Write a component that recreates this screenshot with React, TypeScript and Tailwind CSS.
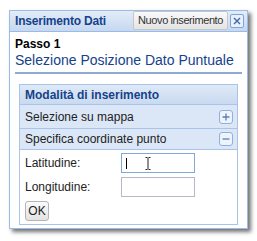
import React from "react";

export default function App() {
  const font = { fontFamily: '"Liberation Sans", Arial, sans-serif' };
  return (
    <div className="w-[257px] h-[241px] bg-white pt-[10px] pl-[9px]" style={font}>
      <div className="w-[239px] h-[219px] border border-[#99bbe8] bg-white shadow-[3px_3px_4px_rgba(0,0,0,0.55)] flex flex-col">
        {/* header */}
        <div className="h-[21px] flex items-center bg-gradient-to-b from-[#e3ecf8] to-[#c6d8f0] border-b border-[#99bbe8] pl-[5px] pr-[3px]">
          <span className="text-[12px] font-bold text-[#15428b] flex-1 leading-none tracking-[-0.2px]">Inserimento Dati</span>
          <button className="h-[19px] mt-[-1px] px-[4px] text-[11px] tracking-[-0.4px] text-[#333] bg-gradient-to-b from-[#fafafa] to-[#e4e4e4] border border-[#c6c6c6] rounded-[2px] leading-none">Nuovo inserimento</button>
          <span className="ml-[2px] w-[14px] h-[14px] border border-[#7fa3d6] rounded-[2px] bg-[#e8f0fb] flex items-center justify-center">
            <svg width="10" height="10" viewBox="0 0 10 10"><path d="M2 2 L8 8 M8 2 L2 8" stroke="#3d6aac" strokeWidth="1.4" /></svg>
          </span>
        </div>
        {/* body */}
        <div className="px-[5px] pt-[5px] flex-1 flex flex-col">
          <div className="text-[12px] font-bold text-black leading-[14px]">Passo 1</div>
          <div className="text-[14px] text-[#15428b] leading-[17px] mt-[1px] pb-[3px] border-b-2 border-[#8eaad3]">Selezione Posizione Dato Puntuale</div>
          <div className="mx-[4px] mt-[10px] border border-[#a8c4ea] flex flex-col">
            <div className="h-[20px] flex items-center pl-[5px] bg-gradient-to-b from-[#dfe9f6] to-[#c9daf0] border-b border-[#a8c4ea] text-[12px] font-bold text-[#15428b]">Modalità di inserimento</div>
            <div className="h-[24px] flex items-center pl-[5px] pr-[4px] bg-[#dbe7f6] border-b border-[#a8c4ea] text-[12px] text-[#222]">
              <span className="flex-1">Selezione su mappa</span>
              <span className="w-[14px] h-[14px] border border-[#8fb0dd] rounded-[3px] bg-[#eef4fc] flex items-center justify-center">
                <svg width="8" height="8" viewBox="0 0 8 8"><path d="M4 0.5 V7.5 M0.5 4 H7.5" stroke="#5a7fb8" strokeWidth="1.3" /></svg>
              </span>
            </div>
            <div className="h-[21px] flex items-center pl-[5px] pr-[4px] bg-[#dbe7f6] border-b border-[#a8c4ea] text-[12px] text-[#222]">
              <span className="flex-1">Specifica coordinate punto</span>
              <span className="w-[14px] h-[14px] border border-[#8fb0dd] rounded-[3px] bg-[#eef4fc] flex items-center justify-center">
                <svg width="8" height="8" viewBox="0 0 8 8"><path d="M0.5 4 H7.5" stroke="#5a7fb8" strokeWidth="1.3" /></svg>
              </span>
            </div>
            <div className="pl-[5px] pt-[3px] pb-[3px] flex flex-col">
              <div className="flex items-center h-[20px]">
                <span className="w-[96px] text-[12px] text-[#222]">Latitudine:</span>
                <div className="w-[74px] h-[20px] border border-[#7fa9db] bg-white flex items-center pl-[4px] gap-[18px]">
                  <span className="w-[1px] h-[11px] bg-black"></span>
                  <svg width="6" height="13" viewBox="0 0 6 13"><path d="M0.5 0.5 H2.5 M3.5 0.5 H5.5 M3 1 V12 M0.5 12.5 H2.5 M3.5 12.5 H5.5" stroke="#222" strokeWidth="1" fill="none" /></svg>
                </div>
              </div>
              <div className="flex items-center h-[20px] mt-[4px]">
                <span className="w-[96px] text-[12px] text-[#222]">Longitudine:</span>
                <div className="w-[74px] h-[20px] border border-[#b5b8c8] bg-white"></div>
              </div>
              <div className="mt-[4px]">
                <button className="w-[24px] h-[20px] text-[12px] text-[#222] border border-[#b5b5b5] rounded-[3px] bg-gradient-to-b from-[#fbfbfb] to-[#e2e2e2] flex items-center justify-center">OK</button>
              </div>
            </div>
          </div>
        </div>
      </div>
    </div>
  );
}
